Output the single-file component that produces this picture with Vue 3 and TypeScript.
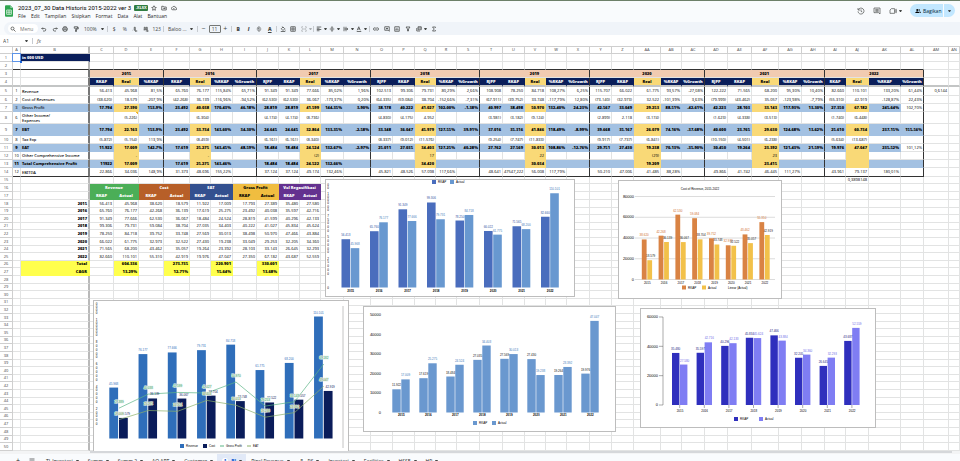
<script setup lang="ts">
interface Cell {
  text: string
  cls: string[]
  span: number
}
interface Row {
  num: number
  cells: Cell[]
}
interface Series {
  color: string
  label: string
  values: number[]
}
interface ChartSpec {
  id: string
  title: string
  box: [number, number]
  base: number
  scale: number
  start: number
  step: number
  bar: number
  offset: number
  series: Series[]
  axis: { x: number; ticks: number[]; stacked: boolean; grid?: [number, number]; line?: boolean }
  labelShift: number
  yearY: number
  boldYears: boolean
  legend: { x: number; text: string; color: string; kind: 'box' | 'line' | 'none' }[]
  legendY: number
}

const widths = [13, 8, 69, 24, 25, 25, 26, 21, 22, 24, 22, 21, 21, 23, 27, 22, 22, 21, 21, 23, 23, 22, 21, 21, 23, 22, 22, 27, 21, 23, 23, 24, 27, 23, 23, 21, 23, 32, 23, 25]
const letter = (i: number): string => (i < 26 ? String.fromCharCode(65 + i) : 'A' + String.fromCharCode(39 + i))
const letters = Array.from({ length: 40 }, (_, i) => letter(i))

const groups = [
  { year: '2015', cols: ['RKAP', 'Real', '%RKAP'] },
  { year: '2016', cols: ['RKAP', 'Real', '%RKAP', '%Growth'] },
  ...['2017', '2018', '2019', '2020', '2021'].map((year) => ({ year, cols: ['RJPP', 'RKAP', 'Real', '%RKAP', '%Growth'] })),
  { year: '2022', cols: ['RKAP', 'Real', '%RKAP', '%Growth'] },
]
const kinds = groups.flatMap((g) => g.cols)
const ends = new Set<number>()
groups.reduce((n, g) => {
  ends.add(n + g.cols.length - 1)
  return n + g.cols.length
}, 0)

const report: Record<number, [string, string, string]> = {
  5: ['1', 'Revenue', '56.413 45.968 81,5% 65.760 76.177 115,84% 65,71% 91.349 91.349 77.666 85,02% 1,96% 102.513 99.306 79.731 80,29% 2,66% 108.908 78.250 84.718 108,27% 6,25% 115.707 66.022 61.775 93,57% -27,08% 122.222 71.565 68.200 95,30% 10,40% 82.660 110.101 133,20% 61,44%'],
  6: ['2', 'Cost of Revenues', '(38.620) 18.579 -207,9% (42.268) 36.139 -116,96% -94,52% (62.530) (62.530) 36.067 -173,37% 0,20% (64.335) (59.084) 38.704 -152,66% -7,31% (67.911) (39.752) 33.748 -117,79% 12,80% (73.140) (32.973) 32.522 -101,39% 3,63% (79.999) (43.462) 35.057 -123,98% -7,79% (55.310) 42.919 -128,87% 22,43%'],
  7: ['3', 'Gross Profit', '17.794 27.390 153,9% 23.492 40.038 170,43% 46,18% 28.819 28.819 41.599 144,35% 3,90% 38.178 40.222 41.027 102,00% -1,38% 40.997 38.498 50.970 132,40% 24,23% 42.567 33.049 29.253 88,51% -42,61% 42.223 28.103 33.143 117,93% 13,30% 27.350 67.182 245,64% 102,70%'],
  8: ['6', 'Other Income/\nExpenses', '_ (5.226) _ _ (6.304) _ _ (4.174) (4.174) (8.736) _ _ (4.830) (4.175) 4.952 _ _ (3.981) (3.182) (9.124) _ _ (2.899) 2.118 (3.174) _ _ (1.623) (4.338) (3.513) _ _ (1.740) (6.448) _ _'],
  9: ['7', 'EBT', '17.794 22.163 153,9% 23.492 33.734 143,60% 34,30% 24.645 24.645 32.864 133,35% -2,58% 33.348 36.047 45.979 127,55% 39,91% 37.016 35.316 41.846 118,49% -8,99% 39.668 35.167 26.079 74,16% -37,68% 40.600 23.765 29.630 124,68% 13,62% 25.610 60.734 237,15% 155,56%'],
  10: ['8', 'Tax Exp', '(5.872) (5.154) 113,9% _ (8.459) _ _ (6.161) (6.161) (8.340) _ _ (8.337) (9.012) (11.576) _ _ (9.254) (7.747) (11.833) _ _ (9.917) (7.737) (6.841) _ _ (10.150) (4.501) (6.238) _ _ (5.634) (13.687) _ _'],
  11: ['9', 'EAT', '11.922 17.009 142,7% 17.619 25.275 143,45% 48,59% 18.484 18.484 24.524 132,67% -2,97% 25.011 27.035 34.403 127,25% 40,28% 27.762 27.569 30.013 108,86% -12,76% 29.751 27.430 19.238 70,13% -35,90% 30.450 19.264 23.392 121,43% 21,59% 19.976 47.047 235,52% 101,12%'],
  12: ['10', 'Other Comprehensive Income', '_ - _ _ - _ _ _ _ (2) _ _ _ _ 17 _ _ _ _ 22 _ _ _ _ (29) _ _ _ _ 23 _ _ _ _ _ _'],
  13: ['11', 'Total Comprehensive Profit', '11922 17.009 _ 17.619 25.275 143,46% _ 18.484 18.484 24.522 132,66% _ _ _ 34.420 _ _ _ _ 30.034 _ _ _ _ 19.209 _ _ _ _ 23.415 _ _ _ _ _ _'],
  14: ['12', 'EBITDA', '22.866 34.036 148,9% 31.373 48.696 155,22% _ 37.124 37.124 49.174 132,46% _ 45.821 48.526 57.098 117,66% _ 48.641 47547,222 56.008 117,79% _ 50.210 47.006 41.485 88,28% _ 49.866 41.742 46.445 111,27% _ 43.961 79.137 180,01% _'],
}

const years = ['2015', '2016', '2017', '2018', '2019', '2020', '2021', '2022']
const data = {
  revenuePlan: [56413, 65760, 91349, 99306, 78250, 66022, 71565, 82660],
  revenue: [45968, 76177, 77666, 79731, 84718, 61775, 68200, 110101],
  costPlan: [38620, 42268, 62530, 59084, 39752, 32973, 43462, 55310],
  cost: [18579, 36139, 36067, 38704, 33748, 32522, 35057, 42919],
  eatPlan: [11922, 17619, 18484, 27035, 27569, 27430, 19264, 19976],
  eat: [17009, 25275, 24524, 34403, 30013, 19238, 23392, 47047],
  grossPlan: [17793, 23492, 28819, 40222, 38498, 33049, 28103, 27350],
  gross: [27389, 40038, 41599, 41027, 50970, 29253, 33143, 67182],
  volumePlan: [35480, 35597, 40296, 45834, 47466, 32205, 26645, 43687],
  volume: [27580, 42716, 42133, 45624, 43884, 34360, 32293, 52559],
}
const columns = Object.values(data)
const fmt = (n: number): string => String(n).replace(/(\d)(?=(\d{3})$)/, '$1.')

const summary = [
  { name: 'Revenue', cls: 'green' },
  { name: 'Cost', cls: 'rust' },
  { name: 'EAT', cls: 'indigo' },
  { name: 'Gross Profit', cls: 'amber' },
  { name: 'Vol Regasifikasi', cls: 'purple' },
]
const totals: Record<number, [string, string[]]> = {
  26: ['Total', ['604.336', '273.735', '220.901', '330.601']],
  27: ['CAGR', ['13,29%', '12,71%', '15,64%', '13,68%']],
}

const cell = (text = '', cls: string[] = [], span = 1): Cell => ({ text, cls, span })
const blanks = (n: number): Cell[] => Array.from({ length: n }, () => cell())

function buildRow(num: number): Row {
  const a = cell()
  const b = cell('', ['freeze'])
  let rest: Cell[] = blanks(38)
  if (num === 1) {
    b.text = 'in 000 USD'
    b.cls.push('navy', 'bold')
  } else if (num === 2) {
    for (const c of [a, b, ...rest.slice(0, 36)]) c.cls.push('rule')
  } else if (num === 3) {
    rest = [...groups.map((g) => cell(g.year, ['peach', 'bold', 'center', 'end'], g.cols.length)), ...blanks(2)]
  } else if (num === 4) {
    rest = [...kinds.map((k, i) => cell(k, [k === 'Real' ? 'gold' : 'navy', 'bold', 'center', ...(ends.has(i) ? ['end'] : [])])), ...blanks(2)]
  } else if (report[num]) {
    const [index, label, values] = report[num]
    const strong = [7, 9, 11, 13].includes(num)
    a.text = index
    a.cls.push('center')
    b.text = label
    b.cls.push('label')
    if (strong) a.cls.push('blue', ...(num > 7 ? ['bold'] : []))
    if (strong) b.cls.push('blue', ...(num > 7 ? ['bold'] : []))
    rest = values.split(' ').map((v, i) => {
      const cls = ['num']
      const plain = i === 35 && (num === 7 || num === 11)
      if (kinds[i] === 'Real' && (strong || num === 12)) cls.push('gold')
      else if (strong && !plain) cls.push('blue')
      if (strong && !plain) cls.push('bold')
      if (ends.has(i)) cls.push('end')
      if (num === 8 && i === 1) cls.push('noted')
      return cell(v === '_' ? '' : v, cls)
    })
    rest.push(cell(num === 5 ? '0,6144' : '', ['num']), cell())
    if (num === 14) for (const c of [a, b, ...rest.slice(0, 36)]) c.cls.push('rule')
  } else if (num === 15) {
    rest[33] = cell('0,3898148', ['num'])
  } else if (num === 16) {
    rest = [...summary.map((s) => cell(s.name, [s.cls, 'bold', 'center'], 2)), ...blanks(28)]
  } else if (num === 17) {
    summary.forEach((s, i) => {
      rest[i * 2] = cell('RKAP', [s.cls, 'bold', 'center'])
      rest[i * 2 + 1] = cell('Actual', [s.cls, 'bold', 'center'])
    })
  } else if (num >= 18 && num <= 25) {
    b.text = years[num - 18]
    b.cls.push('num', 'bold')
    columns.forEach((c, i) => (rest[i] = cell(fmt(c[num - 18]), ['num'])))
  } else if (totals[num]) {
    const [label, values] = totals[num]
    b.text = label
    b.cls.push('num', 'bold', 'yellow')
    values.forEach((v, i) => (rest[i * 2 + 1] = cell(v, ['num', 'bold', 'yellow'])))
  }
  return { num, cells: [a, b, ...rest] }
}
const rows = Array.from({ length: 50 }, (_, i) => buildRow(i + 1))
const rowClass = (n: number): string => {
  if (n === 4 || n === 5 || n === 14) return n === 4 ? 'h9 frozen' : 'h9'
  if (n === 8 || n === 9) return 'h12'
  if (n === 15 || (n > 17 && [1, 3].includes((n - 18) % 5))) return 'h7'
  return 'h8'
}

const charts: ChartSpec[] = [
  {
    id: 'revenue', title: '', box: [248, 116], base: 107.5, scale: 0.000856, start: 15.5, step: 28.5, bar: 8.6, offset: 9.2,
    series: [
      { color: '#4a6dbd', label: '#34539f', values: data.revenuePlan },
      { color: '#6898d0', label: '#447ab9', values: data.revenue },
    ],
    axis: { x: 2, ticks: [0, 25000, 50000, 75000, 100000, 125000], stacked: true },
    labelShift: 0, yearY: 112, boldYears: true, legendY: 2,
    legend: [
      { x: 106, text: 'RKAP', color: '#4a6dbd', kind: 'box' },
      { x: 124, text: 'Actual', color: '#6898d0', kind: 'box' },
    ],
  },
  {
    id: 'cost', title: 'Cost of Revenue, 2015-2022', box: [162, 117], base: 98.5, scale: 0.0010375, start: 22.8, step: 16.8, bar: 4.8, offset: 5.5,
    series: [
      { color: '#d98344', label: '#d07030', values: data.costPlan },
      { color: '#f2c14a', label: '#222222', values: data.cost },
    ],
    axis: { x: 15, ticks: [0, 20000, 40000, 60000, 80000], stacked: false, grid: [16, 156] },
    labelShift: 1, yearY: 102.5, boldYears: false, legendY: 106.5,
    legend: [
      { x: 63, text: 'RKAP', color: '#d98344', kind: 'box' },
      { x: 83, text: 'Actual', color: '#f2c14a', kind: 'box' },
      { x: 103, text: 'Linear (Actual)', color: '', kind: 'none' },
    ],
  },
  {
    id: 'combined', title: '', box: [254, 150], base: 137.5, scale: 0.001108, start: 15.3, step: 29.25, bar: 8.8, offset: 9.7,
    series: [
      { color: '#2f6eba', label: '#2f6eba', values: data.revenue },
      { color: '#0a1c5a', label: '#0a1c5a', values: data.cost },
    ],
    axis: { x: 2.5, ticks: [20000, 40000, 60000, 80000, 100000, 120000], stacked: true },
    labelShift: 2, yearY: 0, boldYears: false, legendY: 145,
    legend: [
      { x: 86, text: 'Revenue', color: '#2f6eba', kind: 'box' },
      { x: 109, text: 'Cost', color: '#0a1c5a', kind: 'box' },
      { x: 126, text: 'Gross Profit', color: '#5bb586', kind: 'line' },
      { x: 153, text: 'EAT', color: '#8bb06a', kind: 'line' },
    ],
  },
  {
    id: 'eat', title: '', box: [251, 124], base: 105.5, scale: 0.001947, start: 28.3, step: 27, bar: 8.4, offset: 9,
    series: [
      { color: '#6a98cf', label: '#111111', values: data.eatPlan },
      { color: '#6a98cf', label: '#447ab9', values: data.eat },
    ],
    axis: { x: 17, ticks: [0, 10000, 20000, 30000, 40000, 50000], stacked: false },
    labelShift: 0, yearY: 109, boldYears: true, legendY: 116,
    legend: [
      { x: 109, text: 'RKAP', color: '#6a98cf', kind: 'box' },
      { x: 128, text: 'Actual', color: '#6a98cf', kind: 'box' },
    ],
  },
  {
    id: 'volume', title: '', box: [234, 118], base: 96, scale: 0.001467, start: 31, step: 24.6, bar: 7.4, offset: 8,
    series: [
      { color: '#2f2fbd', label: '#1c1c80', values: data.volumePlan },
      { color: '#7f7df3', label: '#6f6de8', values: data.volume },
    ],
    axis: { x: 17, ticks: [0, 20000, 40000, 60000], stacked: false, line: true },
    labelShift: 1, yearY: 102.5, boldYears: false, legendY: 110,
    legend: [
      { x: 93, text: 'RKAP', color: '#2f2fbd', kind: 'box' },
      { x: 118, text: 'Actual', color: '#7f7df3', kind: 'box' },
    ],
  },
]
const barX = (c: ChartSpec, s: number, i: number): number => c.start + i * c.step + s * c.offset
const barY = (c: ChartSpec, v: number): number => c.base - v * c.scale
const trends = [
  { color: '#5bb586', ink: '#2f9a63', values: data.gross },
  { color: '#8bb06a', ink: '#5f8a3c', values: data.eat },
]
const trendPoints = (c: ChartSpec, values: number[]): string =>
  values.map((v, i) => `${barX(c, 1, i)},${barY(c, v)}`).join(' ')

// A tick whose digits are stacked one per line; digits above the frame are dropped.
const stack = (c: ChartSpec, tick: number): { d: string; y: number }[] => {
  const digits = String(tick).split('')
  const pitch = digits.length > 5 ? 3.1 : 3.8
  return digits
    .map((d, k) => ({ d, y: barY(c, tick) + (k - (digits.length - 1) / 2) * pitch + 1 }))
    .filter((p) => p.y > 3.5)
}

const menus = ['File', 'Edit', 'Tampilan', 'Sisipkan', 'Format', 'Data', 'Alat', 'Bantuan']
const tabs = [
  { name: 'TI_Investasi', badge: '' },
  { name: 'Summ', badge: '' },
  { name: 'Summ 2', badge: '' },
  { name: 'AQ APT', badge: '' },
  { name: 'Customer', badge: '' },
  { name: 'BI', badge: '1', active: true },
  { name: 'Pipsl Revenue', badge: '' },
  { name: 'RS', badge: '8' },
  { name: 'Investasi', badge: '' },
  { name: 'Facilities', badge: '' },
  { name: 'HSSE', badge: '' },
  { name: 'HR', badge: '' },
]

const icons: Record<string, string> = {
  undo: 'M7 6 3 10l4 4M3 10h11a5 5 0 0 1 0 10H8',
  redo: 'M17 6l4 4-4 4M21 10H10a5 5 0 0 0 0 10h6',
  print: 'M7 8V3h10v5M7 17H3V8h18v9h-4M7 13h10v8H7z',
  paint: 'M5 3h13v6H5zM18 5h3v7h-9v3M10 15h4v7h-4z',
  less: 'M3 17h1M9 5h4v12H9zM21 20h-8m3-3-3 3 3 3',
  more: 'M1 16h1M5 5h4v11H5zM13 5h4v11h-4zM11 20h10m-3-3 3 3-3 3',
  strike: 'M3 12h18M17 7c-1-5-10-4-10 0 0 2 1 3 3 3M7 16c0 6 11 5 10 0',
  fill: 'M5 11l7-7 7 7-7 7zM9 2l4 4M21 15v3M3 22h18',
  borders: 'M3 3h18v18H3zM12 3v18M3 12h18',
  merge: 'M8 3H3v5M3 16v5h5M16 3h5v5M21 16v5h-5M3 12h6m-2-3 3 3-3 3M21 12h-6m2-3-3 3 3 3',
  align: 'M3 4h18M3 9h11M3 14h18M3 19h11',
  valign: 'M3 12h18M12 1v8m-3-3 3 3 3-3M12 23v-8m-3 3 3-3 3 3',
  wrap: 'M4 3v18M12 3v18M6 12h14m-3-3 3 3-3 3',
  rotate: 'M5 17l6-14 6 14M7 12h8M3 22h18',
  link: 'M10 7H7a5 5 0 0 0 0 10h3M14 7h3a5 5 0 0 1 0 10h-3M8 12h8',
  comment: 'M3 3h18v18l-4-4H3zM12 7v7M8 10h8',
  chart: 'M3 3h18v18H3zM8 17v-6M12 17V7M16 17v-4',
  filter: 'M4 4h16l-6 8v8h-4v-8z',
  layers: 'M8 3h13v12H8zM3 8v12h13M8 8h13',
  sigma: 'M18 7V4H6l7 8-7 8h12v-3',
  star: 'M12 3l3 6 6 1-4.500 4.500 1 6.500-5.500-3-5.500 3 1-6.500L3 10l6-1z',
  move: 'M3 5h6l2 3h10v12H3zM9 14h7m-3-3 3 3-3 3',
  cloud: 'M7 19a5 5 0 0 1-1-10 7 7 0 0 1 13 2 4 4 0 0 1 0 8zM9 13l2 2 4-4',
}
const history = ['undo', 'redo', 'print', 'paint']
const inserts = ['link', 'comment', 'chart', 'filter', 'layers']
</script>

<template>
  <div class="app">
    <header class="top">
      <svg class="logo" viewBox="0 0 24 34" aria-hidden="true">
        <path d="M3 0h13l8 8v23a3 3 0 0 1-3 3H3a3 3 0 0 1-3-3V3a3 3 0 0 1 3-3z" fill="#2ea44f" />
        <path d="M16 0l8 8h-8z" fill="#8ed1a1" />
        <path d="M5 14h14v13H5zM5 20.500h14M12 14v13" fill="none" stroke="#fff" stroke-width="2" />
      </svg>
      <div class="heading">
        <div class="title-line">
          <h1>2023_07_30 Data Historis 2015-2022 ver 3</h1>
          <span class="badge">.XLSX</span>
          <button v-for="n in ['star', 'move', 'cloud']" :key="n" class="mark" :aria-label="n">
            <svg class="icon" viewBox="0 0 24 24"><path :d="icons[n]" /></svg>
          </button>
        </div>
        <nav class="menus">
          <button v-for="m in menus" :key="m">{{ m }}</button>
        </nav>
      </div>
      <div class="actions">
        <button aria-label="Riwayat">
          <svg class="big" viewBox="0 0 24 24"><path d="M4 8a9 9 0 1 1-1 5M3 3v6h6M12 7v6l4 2" /></svg>
        </button>
        <button aria-label="Komentar">
          <svg class="big" viewBox="0 0 24 24"><path d="M3 3h18v18l-4-4H3zM7 7h10M7 10h10M7 13h10" /></svg>
        </button>
        <button class="video" aria-label="Rapat">
          <svg class="big" viewBox="0 0 24 24"><path d="M7 5h10v14H3V9zM17 11l5-4v10l-5-4" /></svg>
          <i class="caret"></i>
        </button>
        <div class="share">
          <button class="share-main">
            <svg viewBox="0 0 24 24"><circle cx="9" cy="8" r="4" /><path d="M1 20c0-8 16-8 16 0zM15 4a4 4 0 0 1 0 8zM18 13c3 1 5 3 5 7h-4z" /></svg>
            Bagikan
          </button>
          <button class="share-more" aria-label="Opsi berbagi"><i class="caret"></i></button>
        </div>
      </div>
    </header>

    <div class="toolbar" role="toolbar">
      <label class="search">
        <svg class="icon" viewBox="0 0 24 24"><circle cx="10" cy="10" r="6" /><path d="M15 15l7 7" /></svg>
        <input type="text" placeholder="Menu" aria-label="Menu" />
      </label>
      <div class="group w42">
        <button v-for="n in history" :key="n" :aria-label="n">
          <svg class="icon" viewBox="0 0 24 24"><path :d="icons[n]" /></svg>
        </button>
      </div>
      <label class="drop zoom"><select aria-label="Zoom"><option>100%</option></select><i class="caret"></i></label>
      <i class="sep"></i>
      <div class="group w53">
        <button>$</button>
        <button>%</button>
        <button aria-label="Kurangi desimal"><svg class="icon" viewBox="0 0 24 24"><path :d="icons.less" /></svg></button>
        <button aria-label="Tambah desimal"><svg class="icon" viewBox="0 0 24 24"><path :d="icons.more" /></svg></button>
        <button>123</button>
      </div>
      <i class="sep"></i>
      <label class="drop font"><select aria-label="Font"><option>Baloo ...</option></select><i class="caret"></i></label>
      <i class="sep"></i>
      <div class="group w31">
        <button class="sign">−</button>
        <input class="size" value="11" aria-label="Ukuran font" />
        <button class="sign">+</button>
      </div>
      <i class="sep"></i>
      <div class="group w42">
        <button class="b">B</button>
        <button class="b it">I</button>
        <button aria-label="Coret"><svg class="icon" viewBox="0 0 24 24"><path :d="icons.strike" /></svg></button>
        <button class="b ink">A</button>
      </div>
      <i class="sep"></i>
      <div class="group w31">
        <button v-for="n in ['fill', 'borders', 'merge']" :key="n" :aria-label="n" :class="{ faint: n === 'merge' }">
          <svg class="icon" viewBox="0 0 24 24"><path :d="icons[n]" /></svg>
        </button>
      </div>
      <i class="caret faint"></i>
      <i class="sep"></i>
      <div class="group w53">
        <button v-for="n in ['align', 'valign', 'wrap', 'rotate']" :key="n" class="pair" :aria-label="n">
          <svg class="icon" viewBox="0 0 24 24"><path :d="icons[n]" /></svg><i class="caret"></i>
        </button>
      </div>
      <i class="sep"></i>
      <div class="group w53">
        <button v-for="n in inserts" :key="n" :aria-label="n">
          <svg class="icon" viewBox="0 0 24 24"><path :d="icons[n]" /></svg>
        </button>
      </div>
      <i class="caret"></i>
      <button class="sum" aria-label="Fungsi"><svg class="icon" viewBox="0 0 24 24"><path :d="icons.sigma" /></svg></button>
    </div>

    <div class="formula">
      <input class="name" value="A1" aria-label="Kotak nama" />
      <i class="caret"></i>
      <i class="sep"></i>
      <label for="fx">fx</label>
      <input id="fx" class="fx" value="" />
    </div>

    <main class="sheet">
      <table>
        <colgroup>
          <col v-for="(w, i) in widths" :key="i" :width="w" />
          <col />
        </colgroup>
        <thead>
          <tr>
            <th></th>
            <th v-for="(l, i) in letters" :key="l" :class="{ freeze: i === 1 }">{{ l }}</th>
          </tr>
        </thead>
        <tbody>
          <tr v-for="r in rows" :key="r.num" :class="rowClass(r.num)">
            <th>{{ r.num }}</th>
            <td v-for="(c, i) in r.cells" :key="i" :class="[...c.cls, r.num > 2 && r.num < 15 ? 'framed' : '']" :colspan="c.span">{{ c.text }}</td>
          </tr>
        </tbody>
      </table>
      <span class="cursor"></span>

      <figure v-for="c in charts" :key="c.id" class="chart" :class="c.id">
        <svg :viewBox="`0 0 ${c.box[0]} ${c.box[1]}`">
          <text v-if="c.title" class="chart-title" :x="c.box[0] / 2" y="9">{{ c.title }}</text>
          <template v-for="t in c.axis.ticks" :key="t">
            <line v-if="c.axis.grid" class="grid" :x1="c.axis.grid[0]" :x2="c.axis.grid[1]" :y1="barY(c, t)" :y2="barY(c, t)" />
            <path v-if="c.axis.line" class="axis" :d="`M18 ${barY(c, t)}h4`" />
            <template v-if="c.axis.stacked">
              <text v-for="(p, k) in stack(c, t)" :key="k" class="digit" :x="c.axis.x" :y="p.y">{{ p.d }}</text>
            </template>
            <text v-else class="tick" :x="c.axis.x" :y="barY(c, t) + 1.200">{{ t }}</text>
          </template>
          <path v-if="c.axis.line" class="axis" :d="`M22 ${barY(c, 60000)}V${c.base}`" />
          <template v-for="(y, i) in years" :key="y">
            <rect
              v-for="(s, k) in c.series" :key="k" :x="barX(c, k, i)" :y="barY(c, s.values[i])"
              :width="c.bar" :height="s.values[i] * c.scale" :fill="s.color"
            />
            <path v-if="c.axis.line" class="axis" :d="`M${barX(c, 1, i) - 0.300} ${c.base}v3`" />
            <text v-if="c.yearY" class="year" :class="{ heavy: c.boldYears }" :x="barX(c, 1, i)" :y="c.yearY">{{ y }}</text>
          </template>
          <template v-if="c.id === 'combined'">
            <polyline v-for="t in trends" :key="t.color" class="trend" :points="trendPoints(c, t.values)" :stroke="t.color" />
            <path d="M249 5v142" stroke="#c4c4c4" stroke-width="1" />
          </template>
          <template v-for="(s, k) in c.series" :key="k">
            <text
              v-for="(v, i) in s.values" :key="i" class="value" :fill="s.label"
              :x="barX(c, k, i) + c.bar / 2 + k * c.labelShift" :y="barY(c, v) - 3"
            >{{ fmt(v) }}</text>
          </template>
          <template v-if="c.id === 'combined'">
            <template v-for="t in trends" :key="t.color">
              <text
                v-for="(v, i) in t.values" :key="i" class="value halo" :fill="t.ink"
                :x="barX(c, 1, i)" :y="barY(c, v) - 5"
              >{{ fmt(v) }}</text>
            </template>
          </template>
          <template v-for="l in c.legend" :key="l.text">
            <rect v-if="l.kind === 'box'" :x="l.x" :y="c.legendY - 2" width="4" height="4" :fill="l.color" />
            <rect v-if="l.kind === 'line'" :x="l.x" :y="c.legendY - 0.500" width="4" height="1" :fill="l.color" />
            <text class="legend" :x="l.x + 6" :y="c.legendY + 1.200">{{ l.text }}</text>
          </template>
        </svg>
      </figure>
    </main>

    <div class="scroll"><span></span></div>
    <footer class="tabs">
      <button class="add">+</button>
      <button class="all" aria-label="Semua sheet">
        <svg class="icon" viewBox="0 0 24 24"><path d="M2 4h20M2 12h20M2 20h20" /></svg>
      </button>
      <button v-for="t in tabs" :key="t.name" class="tab" :class="{ active: t.active }">
        <span v-if="t.badge" class="count">{{ t.badge }}</span>{{ t.name }}<i class="caret"></i>
      </button>
    </footer>
  </div>
</template>

<style>
html {
  overflow: hidden;
}
body {
  margin: 0;
  background: #fff;
}
</style>

<style scoped>
.app {
  font-family: 'Open Sans', 'Noto Sans', sans-serif;
  font-size: 5px;
  line-height: 6px;
  color: #444746;
  background: #f9fbfd;
}
button,
input,
select {
  font: inherit;
  color: inherit;
  border: 0;
  padding: 0;
  margin: 0;
  background: none;
  appearance: none;
  min-width: 0;
}
svg {
  display: block;
}
.icon {
  width: 6px;
  height: 6px;
  fill: none;
  stroke: #444746;
  stroke-width: 3;
}
.caret {
  flex: none;
  border: 1px solid transparent;
  border-top: 2px solid #444746;
  border-bottom: 0;
  width: 1px;
}
.faint {
  opacity: 0.4;
}
.top {
  display: flex;
  align-items: flex-start;
  height: 22px;
  box-sizing: border-box;
  border-top: 1px solid #6d8069;
  padding: 3px 5px 0;
}
.logo {
  width: 8px;
  height: 12px;
  margin-top: 1px;
}
.heading {
  flex: 1;
  padding-left: 5px;
}
.title-line {
  display: flex;
  align-items: center;
  height: 8px;
}
h1 {
  margin: 0 3px 0 0;
  font: 400 6px/8px Roboto, sans-serif;
  color: #000;
}
.badge {
  width: 14px;
  margin-right: 1px;
  border-radius: 1px;
  background: #2f7d41;
  color: #fff;
  font-size: 4px;
  font-weight: 700;
  text-align: center;
}
.mark {
  display: flex;
  justify-content: center;
  width: 10px;
}
.menus {
  display: flex;
  gap: 5px;
  height: 8px;
  color: #1f1f1f;
}
.actions {
  display: flex;
  align-items: center;
  height: 13px;
  gap: 8px;
}
.big {
  width: 8px;
  height: 8px;
  fill: none;
  stroke: #444746;
  stroke-width: 2;
}
.video {
  display: flex;
  align-items: center;
  gap: 2px;
}
.share {
  display: flex;
  height: 13px;
  border-radius: 7px;
  overflow: hidden;
  background: #c2e7ff;
  color: #001d35;
}
.share-main {
  display: flex;
  align-items: center;
  gap: 2px;
  width: 34px;
  padding-left: 5px;
  border-right: 1px solid #f9fbfd;
  box-sizing: border-box;
}
.share-main svg {
  width: 6px;
  height: 6px;
}
.share-more {
  display: grid;
  place-items: center;
  width: 11px;
}
.toolbar {
  display: flex;
  align-items: center;
  height: 13px;
  margin-left: 4px;
  padding-left: 4px;
  border-radius: 7px 0 0 7px;
  background: #f0f4f9;
}
.search {
  display: flex;
  align-items: center;
  gap: 4px;
  width: 30px;
  height: 9px;
  margin-right: 1px;
  padding-left: 2px;
  box-sizing: border-box;
  border-radius: 5px;
  background: #fff;
}
.search input {
  width: 16px;
}
.group {
  display: flex;
  align-items: center;
}
.group button {
  display: flex;
  flex: 1;
  align-items: center;
  justify-content: center;
}
.w31 {
  width: 31px;
}
.w42 {
  width: 42px;
}
.w53 {
  width: 53px;
}
.drop {
  display: flex;
  align-items: center;
}
.drop select {
  flex: 1;
}
.zoom {
  width: 20px;
  margin: 0 2px 0 3px;
}
.font {
  width: 25px;
  margin: 0 3px;
}
.sep {
  flex: none;
  width: 1px;
  height: 6px;
  margin: 0 1px;
  background: #c7cbd0;
}
.group .size {
  width: 12px;
  height: 8px;
  box-sizing: border-box;
  border: 1px solid #747775;
  border-radius: 1px;
  text-align: center;
}
.sign {
  font-size: 7px;
}
.b {
  font-weight: 800;
}
.it {
  font-style: italic;
}
.ink {
  text-decoration: underline;
}
.pair {
  gap: 2px;
}
.sum {
  margin-left: 4px;
}
.formula {
  display: flex;
  align-items: center;
  height: 11px;
  padding: 1px 3px 0;
  box-sizing: border-box;
  background: #fff;
}
.name {
  width: 22px;
}
.formula .sep {
  margin: 0 4px;
}
.formula label {
  font-style: italic;
}
.fx {
  flex: 1;
  margin-left: 4px;
}
.sheet {
  position: relative;
  overflow: hidden;
  background: #fff;
}
table {
  width: 100%;
  table-layout: fixed;
  border-collapse: separate;
  border-spacing: 0;
}
th,
td {
  box-sizing: border-box;
  padding: 0 1px;
  border: 0 solid #e2e3e3;
  border-width: 0 1px 1px 0;
  font-size: 4px;
  line-height: 6px;
  font-weight: 400;
  white-space: pre;
  vertical-align: middle;
}
th {
  padding: 0;
  color: #444;
  text-align: center;
  border-color: #cfcfcf;
}
thead th {
  height: 8px;
  border-top: 1px solid #cfcfcf;
}
td {
  color: #000;
  font-weight: 500;
}
.h7 {
  height: 7px;
}
.h8 {
  height: 8px;
}
.h9 {
  height: 9px;
}
.h12 {
  height: 12px;
}
.label {
  font-family: 'Noto Sans', sans-serif;
  line-height: 5px;
}
.freeze {
  border-right: 2px solid #b9b9b9;
}
.frozen > * {
  border-bottom: 2px solid #c3c5c5;
}
.center {
  text-align: center;
  padding: 0;
}
.num {
  text-align: right;
}
.bold {
  font-weight: 800;
}
.navy {
  background: #0a1e5a;
  color: #fff;
  border-right-color: #0a1e5a;
}
.peach {
  background: #f1cbb1;
}
.gold {
  background: #f9d977;
  border-right-color: #f9d977;
  border-bottom-color: #f9d977;
}
.blue {
  background: #a3c1e2;
  border-right-color: #a3c1e2;
  border-bottom-color: #a3c1e2;
}
.yellow {
  background: #ffff4d;
  border-right-color: #ffff4d;
  border-bottom-color: #ffff4d;
}
.green {
  background: #4bae57;
  color: #fff;
  border-color: #4bae57;
}
.rust {
  background: #b75f28;
  color: #fff;
  border-color: #b75f28;
}
.indigo {
  background: #33508f;
  color: #fff;
  border-color: #33508f;
}
.amber {
  background: #f0bd40;
  border-color: #f0bd40;
}
.purple {
  background: #64318f;
  color: #fff;
  border-color: #64318f;
}
.noted {
  background: linear-gradient(225deg, #f0b429 2px, transparent 2px);
}
.framed.end {
  border-right-color: #333;
}
.framed.freeze {
  border-right-color: #777;
}
.frozen .navy,
.frozen .gold {
  border-bottom-color: #c3c5c5;
}
.rule {
  border-bottom-color: #333;
}
.cursor {
  position: absolute;
  left: 12px;
  top: 7px;
  width: 9px;
  height: 9px;
  box-sizing: border-box;
  border: 1px solid #5b93e8;
}
.cursor::after {
  content: '';
  position: absolute;
  right: -2px;
  bottom: -2px;
  width: 2px;
  height: 2px;
  background: #1a64d8;
}
.chart {
  position: absolute;
  margin: 0;
  box-sizing: content-box;
  border: 1px solid #bdbdbd;
  background: #fff;
}
.chart svg {
  width: 100%;
  height: 100%;
}
.revenue {
  left: 325px;
  top: 133px;
  width: 248px;
  height: 116px;
}
.cost {
  left: 618px;
  top: 134px;
  width: 162px;
  height: 117px;
}
.combined {
  left: 93px;
  top: 254px;
  width: 254px;
  height: 150px;
}
.eat {
  left: 363px;
  top: 260px;
  width: 251px;
  height: 124px;
}
.volume {
  left: 640px;
  top: 262px;
  width: 234px;
  height: 118px;
}
.chart text {
  font-family: 'Liberation Sans', sans-serif;
  font-size: 3px;
}
.chart .chart-title {
  text-anchor: middle;
}
.chart .tick {
  font-size: 4px;
  text-anchor: end;
}
.chart .digit,
.chart .year,
.chart .value {
  text-anchor: middle;
}
.chart .heavy {
  font-weight: 700;
}
.chart .halo {
  stroke: #eaf5ee;
  stroke-width: 1;
  paint-order: stroke;
}
.grid {
  stroke: #dcdcdc;
  stroke-width: 1;
}
.axis {
  fill: none;
  stroke: #555;
  stroke-width: 0.5;
}
.trend {
  fill: none;
  stroke-width: 0.7;
}
.scroll {
  height: 3px;
  padding: 0 8px 0 90px;
  background: #f3f4f5;
}
.scroll span {
  display: block;
  height: 2px;
  background: #d5d7da;
}
.tabs {
  display: flex;
  align-items: center;
  height: 13px;
  padding-left: 14px;
  font-size: 5px;
  color: #222;
}
.tab {
  display: flex;
  flex: none;
  align-items: center;
  gap: 3px;
  height: 13px;
  padding: 0 4px 0 5px;
}
.add {
  width: 8px;
  font-size: 7px;
}
.all {
  display: grid;
  place-items: center;
  width: 19px;
}
.active {
  background: #e1e9f7;
  color: #0b57d0;
  font-weight: 700;
}
.count {
  width: 6px;
  border-radius: 3px;
  background: #fff;
  text-align: center;
}
</style>
